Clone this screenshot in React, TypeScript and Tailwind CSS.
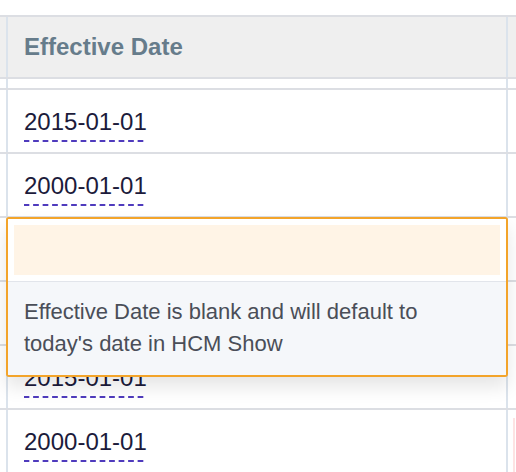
import React from "react";

const dash =
  "bg-[linear-gradient(to_right,#4f3bbd_62%,transparent_62%)] bg-[length:9.5px_2px] bg-repeat-x bg-bottom pb-[7px]";

function Row({ date, pink }: { date: string; pink?: boolean }) {
  return (
    <div className="flex h-[64px] border-b-2 border-[#dcdee3]">
      <div className="w-[6px] shrink-0" />
      <div className="w-[502px] shrink-0 border-x-2 border-[#dbe3ec] pl-[16px] flex items-center">
        {date ? (
          <span className={`text-[24px] leading-[26px] text-[#1c1b3b] ${dash} mt-[8px]`}>{date}</span>
        ) : null}
      </div>
      <div className="flex-1 relative">
        {pink ? <div className="ml-[5px] mt-[8px] w-[2px] h-[60px] bg-[#fde3e3]" /> : null}
      </div>
    </div>
  );
}

export default function App() {
  return (
    <div
      className="relative w-[516px] h-[472px] overflow-hidden bg-white"
      style={{ fontFamily: '"Liberation Sans", Arial, Helvetica, sans-serif' }}
    >
      <div className="h-[15px]" />
      <div className="border-t-2 border-[#dcdee3]">
        <div className="flex h-[62px] bg-[#efefef] border-b-2 border-[#dcdee3]">
          <div className="w-[6px] shrink-0" />
          <div className="w-[502px] shrink-0 border-x-2 border-[#dbe3ec] pl-[16px] flex items-center">
            <span className="text-[24px] font-bold text-[#667c8b]">Effective Date</span>
          </div>
          <div className="flex-1" />
        </div>
        <div className="flex h-[11px] border-b-2 border-[#dcdee3]">
          <div className="w-[6px] shrink-0" />
          <div className="w-[502px] shrink-0 border-x-2 border-[#dbe3ec]" />
          <div className="flex-1" />
        </div>
        <Row date="2015-01-01" />
        <Row date="2000-01-01" />
        <Row date="" />
        <Row date="" />
        <Row date="2015-01-01" />
        <Row date="2000-01-01" pink />
      </div>

      <div className="absolute left-[6px] top-[217px] w-[502px] h-[160px] border-2 border-[#f3a42a] rounded-[3px] bg-white shadow-[0_10px_18px_rgba(0,0,0,0.10)] flex flex-col overflow-hidden">
        <div className="p-[6px] bg-white border-b border-[#e2e5eb]">
          <div className="h-[50px] bg-[#fff4e6]" />
        </div>
        <div className="flex-1 bg-[#f5f7fa] pl-[16px] pr-[14px] pt-[14px]">
          <p className="text-[22px] leading-[32px] text-[#4a4e58]">
            Effective Date is blank and will default to today's date in HCM Show
          </p>
        </div>
      </div>
    </div>
  );
}
